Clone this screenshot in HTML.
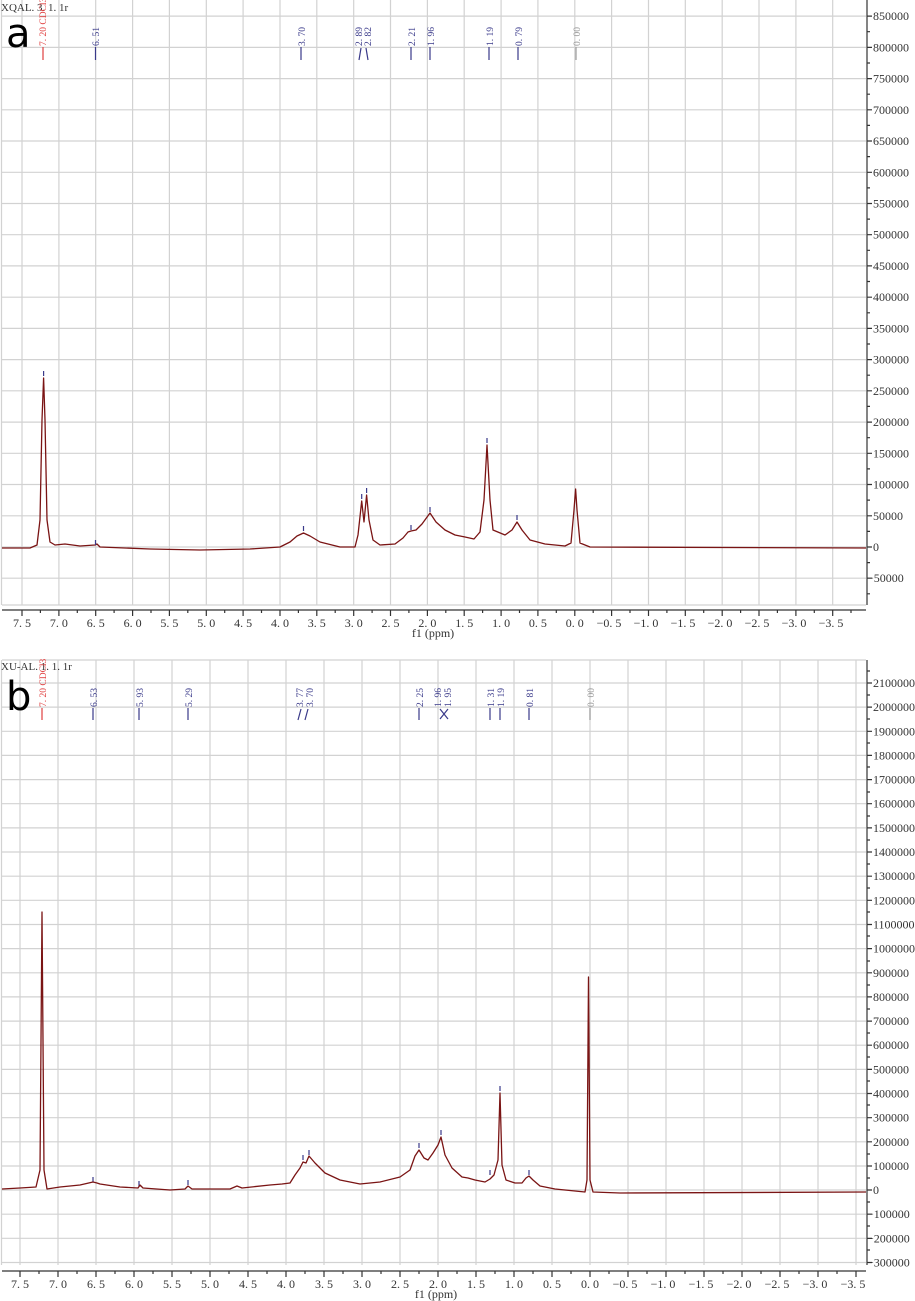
<!DOCTYPE html>
<html><head><meta charset="utf-8"><style>
html,body{margin:0;padding:0;background:#fff;}
svg{display:block;}
.g{stroke:#d2d2d2;stroke-width:1.2;fill:none}
.ax{stroke:#333;stroke-width:1.2;fill:none}
.t{font-family:"Liberation Serif",serif;font-size:12px;fill:#333}
.sp{stroke:#7a1414;stroke-width:1.3;fill:none;stroke-linejoin:round}
.pl{font-family:"Liberation Serif",serif;font-size:9.5px;fill:#3a3a8a}
.pk{stroke:#3a3a8a;stroke-width:1.2;fill:none}
</style></head><body>
<svg width="915" height="1301" viewBox="0 0 915 1301" xmlns="http://www.w3.org/2000/svg">
<path class="g" d="M22 0V605M58.9 0V605M95.7 0V605M132.6 0V605M169.4 0V605M206.3 0V605M243.1 0V605M280 0V605M316.8 0V605M353.7 0V605M390.5 0V605M427.4 0V605M464.2 0V605M501.1 0V605M537.9 0V605M574.8 0V605M611.6 0V605M648.5 0V605M685.3 0V605M722.2 0V605M759 0V605M795.9 0V605M832.7 0V605
M2 578.2H866M2 547H866M2 515.8H866M2 484.5H866M2 453.3H866M2 422.1H866M2 390.8H866M2 359.6H866M2 328.4H866M2 297.2H866M2 265.9H866M2 234.7H866M2 203.5H866M2 172.3H866M2 141H866M2 109.8H866M2 78.6H866M2 47.4H866M2 16.1H866M2 605H866M1.5 0V605"/>
<path class="ax" d="M867 0V605M867 16.1h5M867 47.4h5M867 78.6h5M867 109.8h5M867 141h5M867 172.3h5M867 203.5h5M867 234.7h5M867 265.9h5M867 297.2h5M867 328.4h5M867 359.6h5M867 390.8h5M867 422.1h5M867 453.3h5M867 484.5h5M867 515.8h5M867 547h5M867 578.2h5
M867 31.7h3M867 63h3M867 94.2h3M867 125.4h3M867 156.6h3M867 187.9h3M867 219.1h3M867 250.3h3M867 281.5h3M867 312.8h3M867 344h3M867 375.2h3M867 406.4h3M867 437.7h3M867 468.9h3M867 500.1h3M867 531.4h3M867 562.6h3M867 593.8h3"/>
<g class="t">
<text x="873" y="20">850000</text><text x="873" y="51.4">800000</text><text x="873" y="82.6">750000</text><text x="873" y="113.8">700000</text><text x="873" y="145">650000</text><text x="873" y="176.3">600000</text><text x="873" y="207.5">550000</text><text x="873" y="238.7">500000</text><text x="873" y="269.9">450000</text><text x="873" y="301.2">400000</text><text x="873" y="332.4">350000</text><text x="873" y="363.6">300000</text><text x="873" y="394.8">250000</text><text x="873" y="426.1">200000</text><text x="873" y="457.3">150000</text><text x="873" y="488.5">100000</text><text x="873" y="519.8">50000</text><text x="873" y="551">0</text><text x="867" y="582.2">−50000</text>
</g>
<path class="ax" d="M2 610H866M22 610v6M58.9 610v6M95.7 610v6M132.6 610v6M169.4 610v6M206.3 610v6M243.1 610v6M280 610v6M316.8 610v6M353.7 610v6M390.5 610v6M427.4 610v6M464.2 610v6M501.1 610v6M537.9 610v6M574.8 610v6M611.6 610v6M648.5 610v6M685.3 610v6M722.2 610v6M759 610v6M795.9 610v6M832.7 610v6
M40.4 610v3M77.3 610v3M114.1 610v3M151 610v3M187.8 610v3M224.7 610v3M261.5 610v3M298.4 610v3M335.2 610v3M372.1 610v3M408.9 610v3M445.8 610v3M482.6 610v3M519.5 610v3M556.3 610v3M593.2 610v3M630 610v3M666.9 610v3M703.7 610v3M740.6 610v3M777.4 610v3M814.3 610v3M851 610v3"/>
<g class="t" text-anchor="middle">
<text x="22" y="627">7. 5</text><text x="58.9" y="627">7. 0</text><text x="95.7" y="627">6. 5</text><text x="132.6" y="627">6. 0</text><text x="169.4" y="627">5. 5</text><text x="206.3" y="627">5. 0</text><text x="243.1" y="627">4. 5</text><text x="280" y="627">4. 0</text><text x="316.8" y="627">3. 5</text><text x="353.7" y="627">3. 0</text><text x="390.5" y="627">2. 5</text><text x="427.4" y="627">2. 0</text><text x="464.2" y="627">1. 5</text><text x="501.1" y="627">1. 0</text><text x="537.9" y="627">0. 5</text><text x="574.8" y="627">0. 0</text><text x="609" y="627">−0. 5</text><text x="646" y="627">−1. 0</text><text x="683" y="627">−1. 5</text><text x="720" y="627">−2. 0</text><text x="757" y="627">−2. 5</text><text x="794" y="627">−3. 0</text><text x="831" y="627">−3. 5</text>
<text x="433" y="637">f1 (ppm)</text>
</g>
<text class="t" x="1" y="11" style="font-size:11px">XQAL. 3. 1. 1r</text>
<text x="6" y="47" style="font-family:'DejaVu Sans',sans-serif;font-size:40px;fill:#000">a</text>
<g>
<path d="M43 47V60" stroke="#e04040" stroke-width="1.2"/>
<text class="pl" transform="translate(46,46) rotate(-90)" style="fill:#e04040">7. 20 CDCl3</text>
<path class="pk" d="M95.5 47V60M301 47V60M361 48L359 60M366 48L368 60M411 47V60M430 47V60M489 47V60M518 47V60"/>
<path d="M576 47V60" stroke="#999" stroke-width="1.2"/>
<text class="pl" transform="translate(99,46) rotate(-90)">6. 51</text>
<text class="pl" transform="translate(305,46) rotate(-90)">3. 70</text>
<text class="pl" transform="translate(362,46) rotate(-90)">2. 89</text>
<text class="pl" transform="translate(371,46) rotate(-90)">2. 82</text>
<text class="pl" transform="translate(415,46) rotate(-90)">2. 21</text>
<text class="pl" transform="translate(434,46) rotate(-90)">1. 96</text>
<text class="pl" transform="translate(493,46) rotate(-90)">1. 19</text>
<text class="pl" transform="translate(522,46) rotate(-90)">0. 79</text>
<text class="pl" transform="translate(580,46) rotate(-90)" style="fill:#999">0. 00</text>
</g>
<path class="sp" d="M2 548 L30 548 L37 545 L40 520 L42 420 L43.6 378 L45 420 L47 520 L50 542 L55 545 L65 544 L80 546 L95 545 L97 544 L100 547 L150 549 L200 550 L250 549 L280 547 L290 542 L297 536 L303.5 533 L310 536 L320 542 L340 547 L355 547 L358 535 L361.7 501 L364 522 L366.6 495 L369 520 L373 540 L380 545 L395 544 L403 538 L408 532 L411 531 L416 530 L422 524 L430 513 L436 522 L445 530 L455 535 L465 537 L474 539 L480 532 L484 500 L487 445 L490 500 L493 530 L505 535 L512 530 L517 522 L522 530 L530 540 L545 544 L565 546 L571 543 L574 510 L575.6 489 L577 510 L580 543 L590 547 L866 548"/>

<path class="g" d="M20 660V1265M58 660V1265M96 660V1265M134 660V1265M172 660V1265M210 660V1265M248 660V1265M286 660V1265M324 660V1265M362 660V1265M400 660V1265M438 660V1265M476 660V1265M514 660V1265M552 660V1265M590 660V1265M628 660V1265M666 660V1265M704 660V1265M742 660V1265M780 660V1265M818 660V1265M856 660V1265
M2 660H866M2 683H866M2 707.1H866M2 731.3H866M2 755.4H866M2 779.6H866M2 803.7H866M2 827.9H866M2 852H866M2 876.2H866M2 900.3H866M2 924.5H866M2 948.6H866M2 972.8H866M2 996.9H866M2 1021.1H866M2 1045.2H866M2 1069.4H866M2 1093.5H866M2 1117.7H866M2 1141.8H866M2 1166H866M2 1190H866M2 1214.2H866M2 1238.3H866M2 1262.5H866M1.5 660V1265"/>
<path class="ax" d="M867 660V1265M867 683h5M867 707.1h5M867 731.3h5M867 755.4h5M867 779.6h5M867 803.7h5M867 827.9h5M867 852h5M867 876.2h5M867 900.3h5M867 924.5h5M867 948.6h5M867 972.8h5M867 996.9h5M867 1021.1h5M867 1045.2h5M867 1069.4h5M867 1093.5h5M867 1117.7h5M867 1141.8h5M867 1166h5M867 1190h5M867 1214.2h5M867 1238.3h5M867 1262.5h5
M867 671h3M867 695h3M867 719h3M867 743h3M867 767h3M867 792h3M867 816h3M867 840h3M867 864h3M867 888h3M867 912h3M867 936h3M867 961h3M867 985h3M867 1009h3M867 1033h3M867 1057h3M867 1081h3M867 1105h3M867 1130h3M867 1154h3M867 1178h3M867 1202h3M867 1226h3M867 1250h3"/>
<g class="t">
<text x="873" y="687">2100000</text><text x="873" y="711.1">2000000</text><text x="873" y="735.3">1900000</text><text x="873" y="759.4">1800000</text><text x="873" y="783.6">1700000</text><text x="873" y="807.7">1600000</text><text x="873" y="831.9">1500000</text><text x="873" y="856">1400000</text><text x="873" y="880.2">1300000</text><text x="873" y="904.3">1200000</text><text x="873" y="928.5">1100000</text><text x="873" y="952.6">1000000</text><text x="873" y="976.8">900000</text><text x="873" y="1000.9">800000</text><text x="873" y="1025.1">700000</text><text x="873" y="1049.2">600000</text><text x="873" y="1073.4">500000</text><text x="873" y="1097.5">400000</text><text x="873" y="1121.7">300000</text><text x="873" y="1145.8">200000</text><text x="873" y="1170">100000</text><text x="873" y="1194">0</text><text x="867" y="1218.2">−100000</text><text x="867" y="1242.3">−200000</text><text x="867" y="1266.5">−300000</text>
</g>
<path class="ax" d="M2 1271H866M20 1271v6M58 1271v6M96 1271v6M134 1271v6M172 1271v6M210 1271v6M248 1271v6M286 1271v6M324 1271v6M362 1271v6M400 1271v6M438 1271v6M476 1271v6M514 1271v6M552 1271v6M590 1271v6M628 1271v6M666 1271v6M704 1271v6M742 1271v6M780 1271v6M818 1271v6M856 1271v6
M39 1271v3M77 1271v3M115 1271v3M153 1271v3M191 1271v3M229 1271v3M267 1271v3M305 1271v3M343 1271v3M381 1271v3M419 1271v3M457 1271v3M495 1271v3M533 1271v3M571 1271v3M609 1271v3M647 1271v3M685 1271v3M723 1271v3M761 1271v3M799 1271v3M837 1271v3"/>
<g class="t" text-anchor="middle">
<text x="20" y="1288">7. 5</text><text x="58" y="1288">7. 0</text><text x="96" y="1288">6. 5</text><text x="134" y="1288">6. 0</text><text x="172" y="1288">5. 5</text><text x="210" y="1288">5. 0</text><text x="248" y="1288">4. 5</text><text x="286" y="1288">4. 0</text><text x="324" y="1288">3. 5</text><text x="362" y="1288">3. 0</text><text x="400" y="1288">2. 5</text><text x="438" y="1288">2. 0</text><text x="476" y="1288">1. 5</text><text x="514" y="1288">1. 0</text><text x="552" y="1288">0. 5</text><text x="590" y="1288">0. 0</text><text x="625" y="1288">−0. 5</text><text x="663" y="1288">−1. 0</text><text x="701" y="1288">−1. 5</text><text x="739" y="1288">−2. 0</text><text x="777" y="1288">−2. 5</text><text x="815" y="1288">−3. 0</text><text x="853" y="1288">−3. 5</text>
<text x="436" y="1298">f1 (ppm)</text>
</g>
<text class="t" x="1" y="670" style="font-size:11px">XU-AL. 1. 1. 1r</text>
<text x="6" y="710" style="font-family:'DejaVu Sans',sans-serif;font-size:40px;fill:#000">b</text>
<g>
<path d="M42 708V720" stroke="#e04040" stroke-width="1.2"/>
<text class="pl" transform="translate(46,707) rotate(-90)" style="fill:#e04040">7. 20 CDCl3</text>
<path class="pk" fill="none" d="M93 708V720M139 708V720M188 708V720M301 709L298 720M308 709L305 720M419 708V720M440 709L444 714L440 719M448 709L444 714L448 719M490 708V720M500 708V720M529 708V720"/>
<path d="M590 708V720" stroke="#999" stroke-width="1.2"/>
<text class="pl" transform="translate(97,707) rotate(-90)">6. 53</text>
<text class="pl" transform="translate(143,707) rotate(-90)">5. 93</text>
<text class="pl" transform="translate(192,707) rotate(-90)">5. 29</text>
<text class="pl" transform="translate(303,707) rotate(-90)">3. 77</text>
<text class="pl" transform="translate(313,707) rotate(-90)">3. 70</text>
<text class="pl" transform="translate(423,707) rotate(-90)">2. 25</text>
<text class="pl" transform="translate(441,707) rotate(-90)">1. 96</text>
<text class="pl" transform="translate(451,707) rotate(-90)">1. 95</text>
<text class="pl" transform="translate(494,707) rotate(-90)">1. 31</text>
<text class="pl" transform="translate(504,707) rotate(-90)">1. 19</text>
<text class="pl" transform="translate(533,707) rotate(-90)">0. 81</text>
<text class="pl" transform="translate(594,707) rotate(-90)" style="fill:#999">0. 00</text>
</g>
<path class="pk" d="M93 1177v5M139 1181v5M188 1180v5M303 1155v5M309 1150v5M419 1143v5M441 1130v5M490 1170v5M500 1086v5M529 1170v5M43.6 371v5M95.5 540v5M303.5 526v5M361.7 494v5M366.6 488v5M411 525v5M430 507v5M487 438v5M517 515v5"/>
<path class="sp" d="M2 1189 L20 1188 L36 1187 L40 1170 L42 912 L44 1170 L47 1189 L60 1187 L80 1185 L93 1182 L97 1183 L100 1184 L120 1187 L138 1188 L140 1185 L143 1188 L170 1190 L185 1189 L188 1186 L192 1189 L230 1189 L237 1186 L242 1188 L270 1185 L282 1184 L290 1183 L295 1175 L300 1168 L303 1162 L306 1163 L309 1156 L315 1163 L325 1173 L340 1180 L360 1184 L380 1182 L400 1177 L410 1170 L415 1156 L419 1150 L424 1158 L428 1160 L433 1153 L438 1145 L441 1137 L445 1155 L452 1168 L462 1177 L468 1178 L475 1180 L485 1182 L490 1179 L494 1175 L498 1160 L500 1093 L502 1165 L506 1180 L515 1183 L522 1183 L526 1178 L529 1176 L533 1180 L540 1186 L555 1189 L585 1192 L587 1180 L588.5 977 L590 1180 L593 1192 L620 1193 L866 1192"/>
</svg>
</body></html>
